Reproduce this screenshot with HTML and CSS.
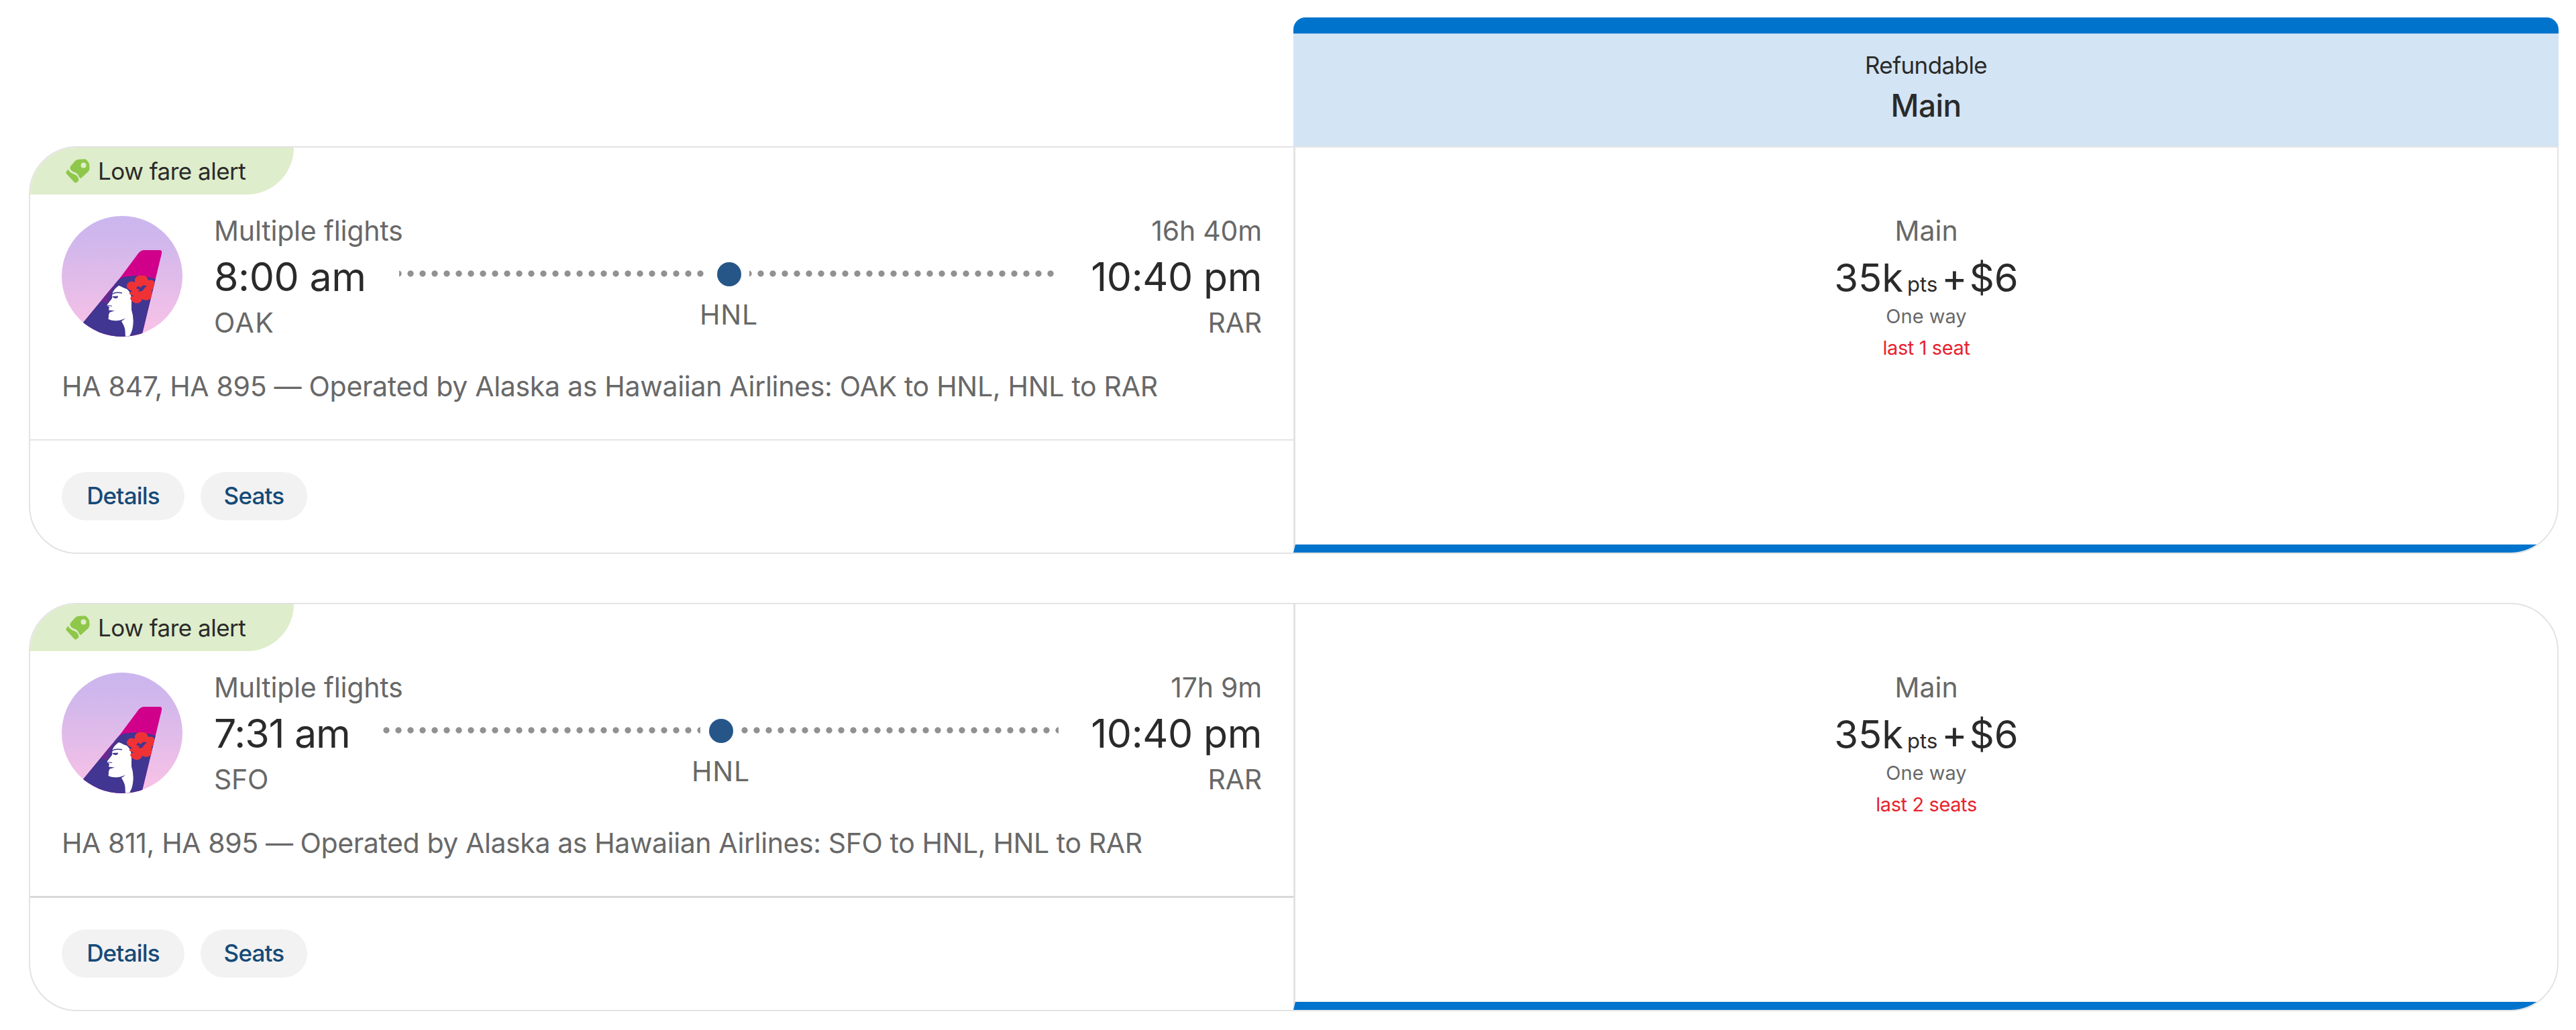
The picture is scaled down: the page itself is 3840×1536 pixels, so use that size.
FILE: index.html
```
<!DOCTYPE html>
<html lang="en">
<head>
  <meta charset="UTF-8" />
  <meta name="viewport" content="width=device-width, initial-scale=1.0" />
  <title>Flight results</title>
  <link rel="stylesheet" href="styles.css">
</head>
<body>

  <!-- Shared icons -->
  <svg class="sprite" aria-hidden="true">
    <defs>
      <linearGradient id="sky" x1="0" y1="0" x2="0" y2="1">
        <stop offset="0" stop-color="#cbb6ee" />
        <stop offset="0.2" stop-color="#d0b7ec" />
        <stop offset="1" stop-color="#fac2e6" />
      </linearGradient>
      <clipPath id="disc"><circle cx="90" cy="90" r="90" /></clipPath>
      <clipPath id="tail">
        <path d="M32 159 L88 91 L114 56 Q118 51 123 51 H146 Q150 51 149 56 L119 180 H40 Z" />
      </clipPath>
    </defs>
    <symbol id="tag" viewBox="0 0 36 36">
      <path d="M14 3 Q16 1 19 .8 L28 .3 Q30 .3 31.500 2 L34.500 6 Q35.500 8 35.400 15 Q35.200 17 33 19.500 L22.500 29 Q21 29.500 19.500 26 Q18 21.500 13.500 20 Q8 18.500 6.500 14.500 Q6 12.500 7.500 10.500 Z M26.500 5.500 A4 4 0 1 0 26.500 13.500 A4 4 0 1 0 26.500 5.500 Z" fill-rule="evenodd" />
      <path d="M3.500 15.500 L.8 19 Q0 20.500 1 22 L12.500 34.500 Q15 36.800 17 34.500 L19.500 32 Q18.800 25.500 14 23.500 Q6 21 3.500 15.500 Z" />
    </symbol>
    <symbol id="airline" viewBox="0 0 180 180">
      <g clip-path="url(#disc)">
        <rect width="180" height="180" fill="url(#sky)" />
        <g clip-path="url(#tail)">
          <rect width="180" height="180" fill="#d1008b" />
          <path d="M66 122 L94 96 L103 92 Q96 89 90 91 Q80 99 66 122 Z" fill="#8f1490" />
          <path d="M20 180 V159 L76 106 Q84 91 101 90 Q125 87 150 98 V180 Z" fill="#413691" />
          <path d="M69 130 Q70 112 84 99 L66 114 L58 128 Z" fill="#6d2790" />
          <path d="M85 104 Q79 108 76 114 Q75 119 75 123 L68 132 Q67 134 71 136 L70 140 L72 143 L70 147 Q70 151 69.500 154 Q76 157 84 156 Q91 155 95 152 Q92 156 89 157 Q94 165 94.500 171 L95 182 H99 Q105 174 106 165 Q108 152 104 140 L104 124 Q103 113 97 109 Q91 107 88 105 Z" fill="#fff" />
          <path d="M75 116.500 Q81 113 90 115" fill="none" stroke="#413691" stroke-width="1.400" />
          <path d="M75 120 L84 119.500 Q84 123 80 123 Q77 123 75 120 Z" fill="#413691" />
          <path d="M70 140.500 L79 141.500 L72 143.500 Z" fill="#413691" />
          <path d="M69 133.500 L75 134.500" stroke="#413691" stroke-width="1.200" />
          <path d="M109 94 Q112 88 120 89 Q127 88 129 96 Q136 94 139 100 Q137 108 134 111 Q137 121 130 125 Q124 127 120 124 Q118 131 110 130 Q103 128 102 122 L107 119 L100 116 L105 112 Q96 109 97 103 Q101 95 109 99 Z" fill="#ef3236" />
          <path d="M111 108 L114 104.500 L118 107 L121 103.500 L127 104 L123 108 L120 112 L114 113 L116 110 Z" fill="#413691" />
        </g>
      </g>
    </symbol>
  </svg>

  <div class="results">
    <!-- Fare column header -->
    <div class="fare-header">
      <div class="fare-type">Refundable</div>
      <div class="fare-name">Main</div>
    </div>

    <div class="card card-first">
      <div class="flight">
        <div class="badge">
          <svg class="tag-icon"><use href="#tag" /></svg>
          <span>Low fare alert</span>
        </div>
        <div class="summary">
          <svg class="airline-logo"><use href="#airline" /></svg>
          <div class="info">
            <div class="info-top">
              <span>Multiple flights</span>
              <span>16h 40m</span>
            </div>
            <div class="route">
              <div class="depart">
                <div class="time">8:00 am</div>
                <div class="airport oak">OAK</div>
              </div>
              <div class="track">
                <div class="dots"></div>
                <div class="stop">
                  <div class="stop-node"></div>
                  <div class="stop-code">HNL</div>
                </div>
                <div class="dots"></div>
              </div>
              <div class="arrive">
                <div class="time">10:40 pm</div>
                <div class="airport">RAR</div>
              </div>
            </div>
          </div>
        </div>
        <div class="operated">HA 847, HA 895 — Operated by Alaska as Hawaiian Airlines: OAK to HNL, HNL to RAR</div>
        <div class="actions">
          <button class="button details">Details</button>
          <button class="button seats">Seats</button>
        </div>
      </div>
      <div class="fare">
        <div class="cabin">Main</div>
        <div class="price"><span>35k</span><span class="pts">pts</span><span class="plus">+</span><span>$6</span></div>
        <div class="trip">One way</div>
        <div class="seats-left">last 1 seat</div>
      </div>
    </div>

    <div class="card">
      <div class="flight">
        <div class="badge">
          <svg class="tag-icon"><use href="#tag" /></svg>
          <span>Low fare alert</span>
        </div>
        <div class="summary">
          <svg class="airline-logo"><use href="#airline" /></svg>
          <div class="info">
            <div class="info-top">
              <span>Multiple flights</span>
              <span>17h 9m</span>
            </div>
            <div class="route">
              <div class="depart depart-short">
                <div class="time">7:31 am</div>
                <div class="airport">SFO</div>
              </div>
              <div class="track track-long">
                <div class="dots"></div>
                <div class="stop">
                  <div class="stop-node"></div>
                  <div class="stop-code">HNL</div>
                </div>
                <div class="dots"></div>
              </div>
              <div class="arrive">
                <div class="time">10:40 pm</div>
                <div class="airport">RAR</div>
              </div>
            </div>
          </div>
        </div>
        <div class="operated operated-tight">HA 811, HA 895 — Operated by Alaska as Hawaiian Airlines: SFO to HNL, HNL to RAR</div>
        <div class="actions actions-dark">
          <button class="button details">Details</button>
          <button class="button seats">Seats</button>
        </div>
      </div>
      <div class="fare">
        <div class="cabin">Main</div>
        <div class="price"><span>35k</span><span class="pts">pts</span><span class="plus">+</span><span>$6</span></div>
        <div class="trip">One way</div>
        <div class="seats-left">last 2 seats</div>
      </div>
    </div>
  </div>

</body>
</html>
```
FILE: styles.css
```
* {
  box-sizing: border-box;
}

body {
  font-family: Inter, "Open Sans", sans-serif;
  background-color: #fff;
  color: #2a2a2a;
  margin: 0;
}

.sprite {
  display: block;
  width: 0;
  height: 0;
}

.results {
  padding: 26px 26px 0 43px;
}

/* Fare column header */
.fare-header {
  height: 192px;
  margin-left: 1885px;
  padding-top: 25px;
  background-color: #d3e4f4;
  border-top: 24px solid #0074cc;
  border-radius: 18px 18px 0 0;
  text-align: center;
}

.fare-type {
  font-size: 35px;
  line-height: 44px;
  letter-spacing: -0.6px;
}

.fare-name {
  margin-top: 8px;
  font-size: 46px;
  font-weight: 500;
  line-height: 60px;
  letter-spacing: -0.6px;
}

/* Result card */
.card {
  display: flex;
  height: 609px;
  border: 2px solid #e3e3e3;
  border-radius: 72px;
  overflow: hidden;
}

.card-first {
  height: 608px;
  margin-bottom: 73px;
  border-top-right-radius: 0;
}

.flight {
  width: 1883px;
}

.badge {
  display: flex;
  align-items: center;
  gap: 12px;
  width: 393px;
  height: 70px;
  padding-left: 53px;
  background-color: #deedcb;
  border-bottom-right-radius: 70px;
  font-size: 35px;
  letter-spacing: -0.5px;
}

.tag-icon {
  width: 36px;
  height: 36px;
  fill: #8fc74a;
}

.summary {
  display: flex;
  gap: 47px;
  padding: 30px 47px 0;
}

.airline-logo {
  width: 180px;
  height: 180px;
  margin-top: 2px;
}

.info {
  flex: 1;
  height: 185px;
  color: #686868;
  font-size: 41px;
  line-height: 48px;
  letter-spacing: -0.2px;
}

.info-top {
  display: flex;
  justify-content: space-between;
}

.route {
  display: flex;
  margin-top: 10px;
}

.depart {
  width: 276px;
}

.depart-short {
  width: 252px;
}

.depart-short .time {
  letter-spacing: -1.1px;
}

.arrive {
  width: 303px;
  text-align: right;
}

.time {
  padding-top: 1px;
  color: #2a2a2a;
  font-size: 59px;
  line-height: 68px;
  letter-spacing: -0.4px;
  white-space: nowrap;
}

.airport {
  margin-top: 10px;
}

.oak {
  letter-spacing: 1.5px;
}

/* Dotted line with the layover in the middle */
.track {
  display: flex;
  flex: 1;
}

.dots {
  flex: 1;
  height: 10px;
  margin-top: 25px;
  background-image: radial-gradient(circle at center, #919191 4.2px, transparent 5px);
  background-size: 18px 10px;
  background-position: -10px 0;
}

.track-long .dots {
  background-position: -4px 0;
}

.stop {
  display: flex;
  flex-direction: column;
  align-items: center;
  width: 61px;
}

.stop-node {
  width: 36px;
  height: 36px;
  margin-top: 13px;
  border-radius: 50%;
  background-color: #265688;
}

.stop-code {
  margin-top: 18px;
  letter-spacing: 0.8px;
}

.operated {
  height: 103px;
  margin-top: 47px;
  padding-left: 47px;
  color: #686868;
  font-size: 41px;
  line-height: 48px;
  letter-spacing: -0.3px;
  white-space: nowrap;
}

.operated-tight {
  letter-spacing: -0.4px;
}

.actions {
  display: flex;
  gap: 24px;
  padding: 47px 47px 0;
  border-top: 2px solid #e3e5e6;
}

.actions-dark {
  border-top: 3px solid #d9d9d9;
}

.button {
  height: 72px;
  padding: 0 0 2px;
  border: none;
  border-radius: 36px;
  background-color: #f2f2f2;
  color: #154a78;
  font-family: inherit;
  font-size: 35px;
  font-weight: 500;
  letter-spacing: -0.8px;
}

.details {
  width: 183px;
}

.seats {
  width: 159px;
}

/* Price column */
.fare {
  display: flex;
  flex: 1;
  flex-direction: column;
  align-items: center;
  padding-top: 100px;
  border-left: 3px solid #e3e3e3;
  border-bottom: 12px solid #0074cc;
}

.cabin {
  color: #686868;
  font-size: 41px;
  line-height: 48px;
}

.price {
  display: flex;
  align-items: baseline;
  height: 68px;
  margin-top: 12px;
  font-size: 58px;
  line-height: 68px;
}

.pts {
  margin: 0 6px;
  font-size: 31px;
}

.plus {
  margin-right: 3px;
}

.trip {
  margin-top: 6px;
  color: #686868;
  font-size: 29px;
  line-height: 36px;
}

.seats-left {
  margin-top: 11px;
  color: #e8222e;
  font-size: 29px;
  line-height: 36px;
  letter-spacing: -0.4px;
}
```
